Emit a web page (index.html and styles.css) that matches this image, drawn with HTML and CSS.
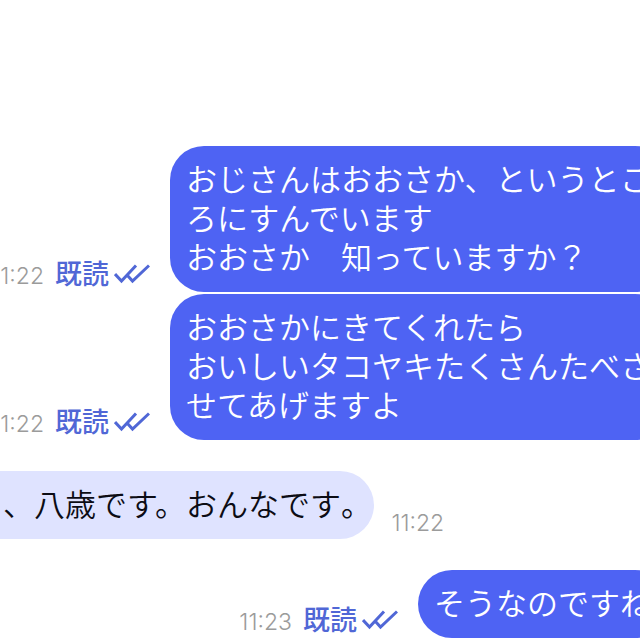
FILE: index.html
```html
<!DOCTYPE html>
<html lang="ja">
  <head>
    <meta charset="UTF-8" />
    <meta name="viewport" content="width=device-width, initial-scale=1.0" />
    <title>チャット</title>
    <link rel="stylesheet" href="styles.css">
  </head>
  <body>
    <main class="chat">
      <!-- Sent -->
      <div class="message sent">
        <div class="meta">
          <time>11:22</time>
          <span class="read">既読</span>
          <svg class="checks" viewBox="0 0 36 20" aria-hidden="true">
            <path d="M1 10L7.5 17L22 1.5M13.5 11.5L18.5 17L35 1.5" />
          </svg>
        </div>
        <p class="bubble">おじさんはおおさか、というところにすんでいます<br>おおさか　知っていますか？</p>
      </div>
      <div class="message sent grouped">
        <div class="meta">
          <time>11:22</time>
          <span class="read">既読</span>
          <svg class="checks" viewBox="0 0 36 20" aria-hidden="true">
            <path d="M1 10L7.5 17L22 1.5M13.5 11.5L18.5 17L35 1.5" />
          </svg>
        </div>
        <p class="bubble">おおさかにきてくれたら<br>おいしいタコヤキたくさんたべさせてあげますよ</p>
      </div>

      <!-- Received -->
      <div class="message received">
        <p class="bubble">、八歳です。おんなです<span class="half">。</span></p>
        <div class="meta">
          <time>11:22</time>
        </div>
      </div>

      <!-- Sent -->
      <div class="message sent">
        <div class="meta">
          <time>11:23</time>
          <span class="read">既読</span>
          <svg class="checks" viewBox="0 0 36 20" aria-hidden="true">
            <path d="M1 10L7.5 17L22 1.5M13.5 11.5L18.5 17L35 1.5" />
          </svg>
        </div>
        <p class="bubble">そうなのですね</p>
      </div>
    </main>
  </body>
</html>
```
FILE: styles.css
```css
:root {
  --sent-bg: #4e63f3;
  --received-bg: #dfe3ff;
  --read-color: #5067d6;
  --time-color: #9b9b9b;
}

* {
  box-sizing: border-box;
}

body {
  margin: 0;
  background: #fff;
  font-family: "Noto Sans CJK JP", sans-serif;
  overflow: hidden;
}

/* The conversation runs past the right edge of the window */
.chat {
  display: flex;
  flex-direction: column;
  gap: 31px;
  margin-right: -29px;
  padding-top: 146px;
}

.message {
  display: flex;
  align-items: flex-end;
}

.sent {
  justify-content: flex-end;
  gap: 20px;
}

.received {
  gap: 17px;
}

.grouped {
  margin-top: -29px;
}

.bubble {
  flex: none;
  max-width: 499px;
  margin: 0;
  padding: 12px 18px 17px 16px;
  border-radius: 34px;
  font-size: 31px;
  font-weight: 350;
  line-height: 39px;
  line-break: anywhere;
}

.sent .bubble {
  background: var(--sent-bg);
  color: #fff;
}

.received .bubble {
  padding-left: 3px;
  border-radius: 0 34px 34px 0;
  background: var(--received-bg);
  color: #0c0c14;
}

.half {
  font-feature-settings: "halt";
}

.meta {
  display: flex;
  flex: none;
  align-items: baseline;
  padding-bottom: 2px;
}

.meta time {
  color: var(--time-color);
  font-family: Inter, sans-serif;
  font-size: 23px;
  font-weight: 300;
  line-height: 28px;
}

.read {
  margin-left: 11px;
  color: var(--read-color);
  font-size: 27px;
  font-weight: 500;
  line-height: 30px;
}

.checks {
  align-self: center;
  width: 36px;
  height: 20px;
  margin-left: 5px;
  fill: none;
  stroke: var(--read-color);
  stroke-width: 3;
}
```
